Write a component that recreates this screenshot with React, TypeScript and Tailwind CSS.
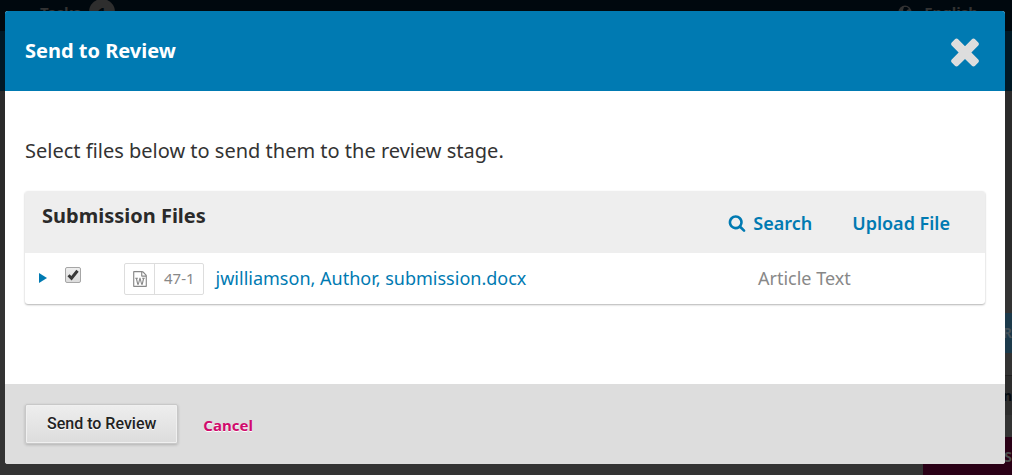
import React, { useState } from "react";

const TIMES =
  "M1490 1322q0 40-28 68l-136 136q-28 28-68 28t-68-28l-294-294-294 294q-28 28-68 28t-68-28l-136-136q-28-28-28-68t28-68l294-294-294-294q-28-28-28-68t28-68l136-136q28-28 68-28t68 28l294 294 294-294q28-28 68-28t68 28l136 136q28 28 28 68t-28 68l-294 294 294 294q28 28 28 68z";
const SEARCH =
  "M1216 832q0-185-131.5-316.5t-316.5-131.5-316.5 131.5-131.5 316.5 131.5 316.5 316.5 131.5 316.5-131.5 131.5-316.5zm512 832q0 52-38 90t-90 38q-54 0-90-38l-343-342q-179 124-399 124-143 0-273.5-55.5t-225-150-150-225-55.5-273.5 55.5-273.5 150-225 225-150 273.5-55.5 273.5 55.5 225 150 150 225 55.5 273.5q0 220-124 399l343 343q37 37 37 90z";
const WORD_FILE =
  "M1596 380q28 28 48 76t20 88v1152q0 40-28 68t-68 28h-1344q-40 0-68-28t-28-68v-1600q0-40 28-68t68-28h896q40 0 88 20t76 48zm-444-244v376h376q-10-29-22-41l-313-313q-12-12-41-22zm384 1528v-1024h-416q-40 0-68-28t-28-68v-416h-768v1536h1280zm-1175-896v107h70l164 661h159l128-485q7-20 10-46 2-16 2-24h4l3 24q1 3 3.5 20t5.5 26l128 485h159l164-661h70v-107h-300v107h90l-99 438q-5 20-7 46l-2 21h-4l-3-21q-1-5-4-21t-5-25l-144-545h-114l-144 545q-2 9-4.5 24.5t-3.5 21.5l-4 21h-4l-2-21q-2-26-7-46l-99-438h90v-107h-300z";

function Icon({ path, className }: { path: string; className: string }) {
  return (
    <svg viewBox="0 0 1792 1792" fill="currentColor" aria-hidden="true" className={className}>
      <path d={path} />
    </svg>
  );
}

/* The dimmed page behind the dialog */
function Backdrop() {
  return (
    <div aria-hidden="true" className="absolute inset-0 flex flex-col overflow-hidden bg-[#333333] text-[#333333]">
      <div className="flex h-[31px] shrink-0 justify-between bg-[#00080e] pr-[34px] pl-10 text-[15px] font-bold">
        <div className="flex h-6 items-center gap-2">
          Tasks
          <span className="flex size-[26px] items-center justify-center rounded-full bg-[#2e2e2e] text-[#00080e]">1</span>
        </div>
        <div className="flex h-6 items-center gap-3">
          <svg viewBox="0 0 14 14" className="size-[14px]">
            <circle cx="7" cy="7" r="6.5" fill="#333333" />
            <path d="M6 2l3 0 2 2-2 1-1 2-2 0-1-2zM9 8l3-1-1 3-2 2z" fill="#00080e" />
          </svg>
          English
        </div>
      </div>
      <div className="h-[60px] shrink-0 bg-[#001824]" />
      <div className="h-[179px] shrink-0 bg-[#2b2b2b]" />
      <div className="mt-[43px] ml-auto flex w-[89px] shrink-0 flex-col gap-[22px] text-sm font-bold">
        <div className="flex h-10 items-center justify-end bg-[#1c3a4b] text-[#45525a]">R</div>
        <div className="flex h-10 items-center justify-end border-t border-[#222222] bg-[#2d2d2d] text-[#050b10]">n</div>
        <div className="flex h-10 items-center justify-end bg-[#2a0016] text-[#4d4d4d]">S</div>
      </div>
    </div>
  );
}

export default function App() {
  const [checked, setChecked] = useState(true);

  return (
    <div className="relative min-h-screen py-[11px] pr-[7px] pl-[5px] font-['Noto_Sans','Open_Sans',sans-serif]">
      <Backdrop />
      <section
        role="dialog"
        aria-labelledby="dialog-title"
        className="relative overflow-hidden rounded-[3px] bg-white"
      >
        <header className="flex h-20 items-center justify-between bg-[#007ab2] pr-[19px] pl-5">
          <h1 id="dialog-title" className="text-[20px] leading-6 font-bold text-white">
            Send to Review
          </h1>
          <button type="button" aria-label="Close" className="text-[#dddddd]">
            <Icon path={TIMES} className="size-[42px]" />
          </button>
        </header>

        <div className="px-5 pt-[46px] pb-20">
          <p className="text-[20px] leading-7 text-[#333333]">Select files below to send them to the review stage.</p>

          <div className="mt-[26px] overflow-hidden rounded-[3px] shadow-[0_1px_2px_rgba(0,0,0,0.3)]">
            <div className="flex h-[62px] items-start justify-between bg-[#eeeeee] pr-[35px] pl-[17px]">
              <h2 id="files-title" className="pt-[11px] text-[20px] leading-7 font-bold text-[#2a2a2a]">
                Submission Files
              </h2>
              <div className="flex gap-10 pt-5 text-[18px] leading-6 font-semibold text-[#007ab2]">
                <button type="button" className="flex items-center gap-[7px]">
                  <Icon path={SEARCH} className="size-[18px]" />
                  Search
                </button>
                <a href="#upload">Upload File</a>
              </div>
            </div>
            <table aria-labelledby="files-title" className="w-full">
              <tbody>
                <tr className="h-[51px]">
                  <td className="p-0">
                    <div className="flex items-center pl-[14px]">
                      <button type="button" aria-label="Show file details" className="mb-[2px] text-[#007ab2]">
                        <svg viewBox="0 0 8 10" fill="currentColor" aria-hidden="true" className="h-[10px] w-2">
                          <path d="M0 0l8 5-8 5z" />
                        </svg>
                      </button>
                      <label className="relative mr-[43px] mb-[7px] ml-[18px] block size-4">
                        <input
                          type="checkbox"
                          aria-label="Select jwilliamson, Author, submission.docx"
                          checked={checked}
                          onChange={(e) => setChecked(e.target.checked)}
                          className="block size-4 appearance-none rounded-[2px] border border-[#a6a6a6] bg-linear-to-b from-[#eeeeee] to-[#dcdcdc]"
                        />
                        {checked && (
                          <svg viewBox="0 0 16 16" aria-hidden="true" className="pointer-events-none absolute inset-0 size-4">
                            <path d="M3.5 8.3l3 3 6-7.6" fill="none" stroke="#3a3a3a" strokeWidth="3" />
                          </svg>
                        )}
                      </label>
                      <span className="mr-3 flex h-8 items-center rounded-[2px] border border-[#dddddd] text-[15px] text-[#888888]">
                        <span className="flex h-full w-[30px] items-center justify-center border-r border-[#dddddd]">
                          <Icon path={WORD_FILE} className="size-4" />
                        </span>
                        <span className="pr-2 pl-[9px]">47-1</span>
                      </span>
                      <a href="#file" className="pb-[2px] text-[18px] leading-6 text-[#007ab2]">
                        jwilliamson, Author, submission.docx
                      </a>
                    </div>
                  </td>
                  <td className="w-[227px] pt-0 pb-[2px] text-[18px] leading-6 text-[#888888]">Article Text</td>
                </tr>
              </tbody>
            </table>
          </div>
        </div>

        <footer className="flex h-20 items-center gap-[25px] bg-[#dddddd] px-5">
          <button
            type="button"
            className="h-10 rounded-[2px] border border-[#c8c8c8] bg-linear-to-b from-[#eeeeee] to-[#dcdcdc] px-[21px] font-['Roboto','Liberation_Sans',sans-serif] text-[16px] font-medium text-[#222222] shadow-[inset_0_0_0_1px_#f0f0f0,0_1px_3px_rgba(0,0,0,0.2)] [text-shadow:0_1px_0_#ffffff]"
          >
            Send to Review
          </button>
          <a href="#cancel" className="pt-[2px] text-[15px] leading-6 font-bold text-[#d00a6c] [text-shadow:0_1px_0_#ffffff]">
            Cancel
          </a>
        </footer>
      </section>
    </div>
  );
}
